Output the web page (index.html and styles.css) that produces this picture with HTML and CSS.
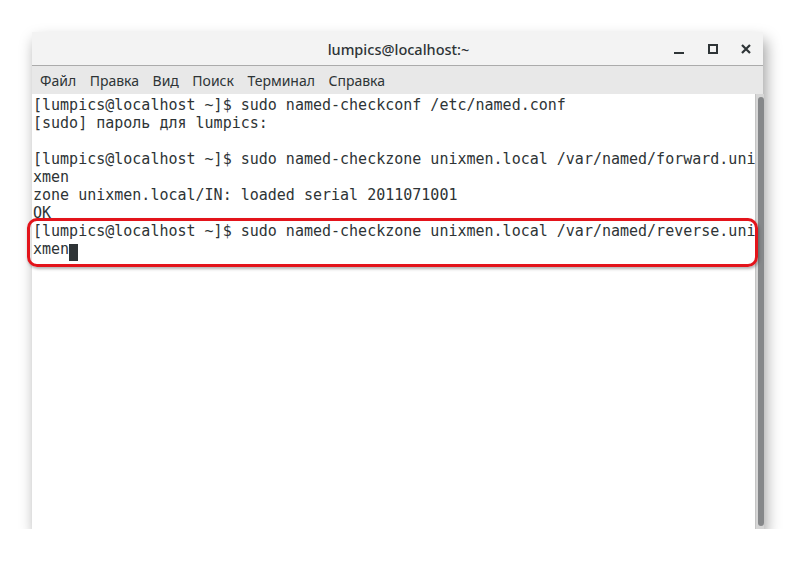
FILE: index.html
```html
<!DOCTYPE html>
<html>

<head>
    <meta charset="utf-8">
    <link rel="stylesheet" href="styles.css">
</head>

<body>
    <div class="window">
        <div class="titlebar">
            <span class="title">lumpics@localhost:~</span>
            <div class="win-buttons">
                <span class="btn-min"></span>
                <span class="btn-max"></span>
                <svg class="btn-close" width="12" height="12" viewBox="0 0 12 12">
                    <path d="M2 2 L10 10 M10 2 L2 10" stroke="#2e3436" stroke-width="2.2" />
                </svg>
            </div>
        </div>
        <div class="menubar">
            <span>Файл</span>
            <span>Правка</span>
            <span>Вид</span>
            <span>Поиск</span>
            <span>Терминал</span>
            <span>Справка</span>
        </div>
        <div class="terminal">
            <pre class="output">[lumpics@localhost ~]$ sudo named-checkconf /etc/named.conf
[sudo] пароль для lumpics:

[lumpics@localhost ~]$ sudo named-checkzone unixmen.local /var/named/forward.uni
xmen
zone unixmen.local/IN: loaded serial 2011071001
OK
[lumpics@localhost ~]$ sudo named-checkzone unixmen.local /var/named/reverse.uni
xmen<span class="cursor"> </span></pre>
            <div class="scrollbar">
                <div class="thumb"></div>
            </div>
            <div class="highlight"></div>
        </div>
    </div>
</body>

</html>
```
FILE: styles.css
```css
body {
    margin: 0;
    padding: 32px 0 0 32px;
    background: #fff;
    font-family: 'Noto Sans', 'Open Sans', sans-serif;
}

.window {
    width: 731px;
    height: 497px;
    display: flex;
    flex-direction: column;
    background: #fff;
    box-shadow: 3px 8px 14px rgba(0, 0, 0, 0.38);
}

.titlebar {
    height: 33px;
    position: relative;
    display: flex;
    justify-content: center;
    align-items: center;
    background: #f3f3f3;
    border-bottom: 1px solid #ababab;
}

.title {
    font-size: 14.5px;
    font-weight: 500;
    color: #2e3436;
    margin-left: 2px;
}

.win-buttons {
    position: absolute;
    right: 10px;
    top: 0;
    height: 33px;
    display: flex;
    align-items: center;
    gap: 22px;
}

.btn-min {
    width: 10px;
    height: 2px;
    background: #2e3436;
    margin-top: 9px;
}

.btn-max {
    width: 6px;
    height: 6px;
    border: 2px solid #2e3436;
    margin-left: 2px;
}

.btn-close {
    display: block;
    margin-right: 1px;
}

.menubar {
    height: 28px;
    display: flex;
    align-items: center;
    gap: 13.5px;
    padding-left: 8px;
    background: #e8e8e8;
    font-size: 14px;
    color: #2e3436;
}

.terminal {
    flex: 1;
    position: relative;
    display: flex;
    background: #fff;
}

.output {
    flex: 1;
    margin: 0;
    padding: 2px 0 0 1px;
    font-family: 'DejaVu Sans Mono', monospace;
    font-size: 15px;
    line-height: 18px;
    color: #2e3436;
    white-space: pre;
}

.cursor {
    display: inline-block;
    width: 9px;
    height: 17px;
    vertical-align: -4px;
    background: #2e3436;
}

.scrollbar {
    width: 10px;
    background: #d6d6d6;
    border-left: 1px solid #c4c4c4;
    padding: 3px 0 3px 2px;
    box-sizing: border-box;
}

.thumb {
    width: 6px;
    height: 100%;
    border-radius: 3px;
    background: #858789;
}

.highlight {
    position: absolute;
    left: -5px;
    top: 124px;
    width: 725px;
    height: 43px;
    border: 3px solid #e3141b;
    border-radius: 10px;
    box-shadow: 1px 2px 3px rgba(0, 0, 0, 0.3);
}
```
